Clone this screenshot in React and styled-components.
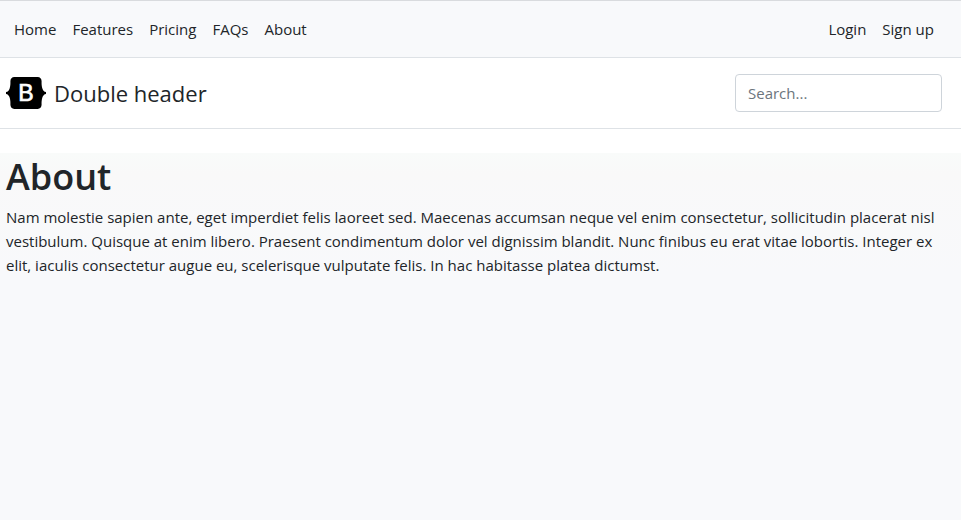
import React from 'react';
import styled, { createGlobalStyle } from 'styled-components';

const GlobalStyle = createGlobalStyle`
  * {
    box-sizing: border-box;
  }

  body {
    margin: 0;
    background: #ffffff;
    color: #212529;
    font-family: 'Open Sans', 'Noto Sans', sans-serif;
    font-size: 15px;
    line-height: 24px;
  }
`;

const Page = styled.div`
  display: flex;
  flex-direction: column;
  min-height: 100vh;
`;

const Nav = styled.nav`
  display: flex;
  justify-content: space-between;
  padding: 8px 19px 8px 6px;
  background: #f8f9fb;
  border-top: 1px solid #d9dbde;
  border-bottom: 1px solid #dee2e6;
`;

const NavList = styled.ul`
  display: flex;
  margin: 0;
  padding: 0;
  list-style: none;
`;

const NavLink = styled.a`
  display: block;
  padding: 8px;
  color: #212529;
  text-decoration: none;
`;

const Header = styled.header`
  display: flex;
  align-items: center;
  justify-content: space-between;
  margin-bottom: 24px;
  padding: 16px 19px 16px 6px;
  border-bottom: 1px solid #dee2e6;
`;

const Brand = styled.a`
  display: flex;
  align-items: center;
  gap: 8px;
  color: #212529;
  font-size: 22px;
  text-decoration: none;
`;

const Logo = styled.svg`
  width: 40px;
  height: 32px;
`;

const Search = styled.input`
  width: 207px;
  height: 38px;
  padding: 6px 12px;
  border: 1px solid #ced4da;
  border-radius: 4px;
  background: #ffffff;
  color: #212529;
  font: inherit;

  &::placeholder {
    color: #6c757d;
    opacity: 1;
  }
`;

const Main = styled.main`
  flex: 1;
  padding: 0 19px 0 6px;
  background: linear-gradient(#f9fbfa, #f9f9f9 20px, #f8f9fb 120px);
`;

const Title = styled.h1`
  margin: 0 0 4px;
  font-size: 36px;
  font-weight: 600;
  line-height: 48px;
`;

const Text = styled.p`
  margin: 0;
`;

const pages = ['Home', 'Features', 'Pricing', 'FAQs', 'About'];
const account = ['Login', 'Sign up'];

const Links = ({ items }) => (
  <NavList>
    {items.map((item) => (
      <li key={item}>
        <NavLink href="#">{item}</NavLink>
      </li>
    ))}
  </NavList>
);

const App = () => (
  <Page>
    <GlobalStyle />
    <Nav>
      <Links items={pages} />
      <Links items={account} />
    </Nav>
    <Header>
      <Brand href="#">
        <Logo viewBox="0 0 118 94" aria-hidden="true">
          <path d="M24.509 0c-6.733 0-11.715 5.893-11.492 12.284.214 6.14-.064 14.092-2.066 20.577C8.943 39.365 5.547 43.485 0 44.014v5.972c5.547.529 8.943 4.649 10.951 11.153 2.002 6.485 2.28 14.437 2.066 20.577C12.794 88.106 17.776 94 24.51 94H93.5c6.733 0 11.714-5.893 11.491-12.284-.214-6.14.064-14.092 2.066-20.577 2.009-6.504 5.396-10.624 10.943-11.153v-5.972c-5.547-.529-8.934-4.649-10.943-11.153-2.002-6.484-2.28-14.437-2.066-20.577C105.214 5.894 100.233 0 93.5 0H24.508z" />
          <text
            x="59"
            y="71"
            fill="#fff"
            stroke="#fff"
            strokeWidth="2"
            fontFamily="'Liberation Sans', sans-serif"
            fontSize="68"
            textAnchor="middle"
          >
            B
          </text>
        </Logo>
        <span>Double header</span>
      </Brand>
      <form role="search">
        <Search type="search" placeholder="Search..." aria-label="Search" />
      </form>
    </Header>
    <Main>
      <Title>About</Title>
      <Text>
        Nam molestie sapien ante, eget imperdiet felis laoreet sed. Maecenas accumsan neque vel enim
        consectetur, sollicitudin placerat nisl vestibulum. Quisque at enim libero. Praesent
        condimentum dolor vel dignissim blandit. Nunc finibus eu erat vitae lobortis. Integer ex
        elit, iaculis consectetur augue eu, scelerisque vulputate felis. In hac habitasse platea
        dictumst.
      </Text>
    </Main>
  </Page>
);

export default App;
